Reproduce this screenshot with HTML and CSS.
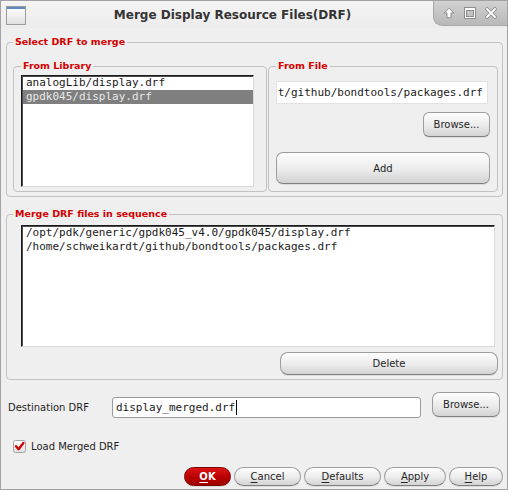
FILE: index.html
```html
<!DOCTYPE html>
<html>
<head>
<meta charset="utf-8">
<title>Merge Display Resource Files(DRF)</title>
<link rel="stylesheet" href="styles.css">
</head>
<body>
<div class="window">
  <div class="titlebar">
    <div class="app-icon"></div>
    <div class="title">Merge Display Resource Files(DRF)</div>
    <div class="wm">
      <svg width="12" height="12" viewBox="0 0 12 12"><path d="M6 1.2 L10.8 6 L8 6 L8 10.8 L4 10.8 L4 6 L1.2 6 Z" fill="#fff" stroke="#8c8c8c" stroke-width="1" stroke-linejoin="round"/></svg>
      <svg width="12" height="12" viewBox="0 0 12 12"><rect x="0.5" y="0.5" width="11" height="11" fill="#fff" stroke="#8c8c8c"/><rect x="2.5" y="3.5" width="7" height="6" fill="#c3c3c3" stroke="#8c8c8c"/></svg>
      <svg width="12" height="12" viewBox="0 0 12 12"><path d="M2 2 L10 10 M10 2 L2 10" stroke="#8c8c8c" stroke-width="3.6" stroke-linecap="round"/><path d="M2 2 L10 10 M10 2 L2 10" stroke="#fff" stroke-width="1.8" stroke-linecap="round"/></svg>
    </div>
  </div>
  <div class="content">
    <div class="group g-select">
      <div class="group-title">Select DRF to merge</div>
      <div class="select-row">
        <div class="group sub lib">
          <div class="group-title">From Library</div>
          <div class="listbox lib-list">
            <div class="row">analogLib/display.drf</div>
            <div class="row selected">gpdk045/display.drf</div>
          </div>
        </div>
        <div class="group sub file">
          <div class="group-title">From File</div>
          <div class="textfield">t/github/bondtools/packages.drf</div>
          <button class="btn browse-small">Browse...</button>
          <button class="btn add">Add</button>
        </div>
      </div>
    </div>
    <div class="group g-seq">
      <div class="group-title">Merge DRF files in sequence</div>
      <div class="listbox seq-list">
        <div class="row">/opt/pdk/generic/gpdk045_v4.0/gpdk045/display.drf</div>
        <div class="row">/home/schweikardt/github/bondtools/packages.drf</div>
      </div>
      <button class="btn delete">Delete</button>
    </div>
    <div class="dest-row">
      <span class="dest-label">Destination DRF</span>
      <div class="entry">display_merged.drf<span class="caret"></span></div>
      <button class="btn browse-dest">Browse...</button>
    </div>
    <div class="check-row">
      <svg class="checkbox" width="13" height="13" viewBox="0 0 13 13">
        <defs><linearGradient id="cb" x1="0" y1="0" x2="0" y2="1"><stop offset="0" stop-color="#ffffff"/><stop offset="1" stop-color="#dedede"/></linearGradient></defs>
        <rect x="0.5" y="0.5" width="12" height="12" rx="2" fill="url(#cb)" stroke="#a6a6a6"/>
        <path d="M3 6.2 L5.6 9.2 L10.4 3" fill="none" stroke="#d00000" stroke-width="2.3" stroke-linecap="round" stroke-linejoin="round"/>
      </svg>
      <span class="check-label">Load Merged DRF</span>
    </div>
    <div class="footer">
      <button class="btn pill ok"><u>O</u>K</button>
      <button class="btn pill cancel"><u>C</u>ancel</button>
      <button class="btn pill defaults"><u>D</u>efaults</button>
      <button class="btn pill apply"><u>A</u>pply</button>
      <button class="btn pill help"><u>H</u>elp</button>
    </div>
  </div>
</div>
</body>
</html>
```
FILE: styles.css
```css
html, body {
  margin: 0;
  padding: 0;
  background: #efefef;
}
body {
  font-family: "DejaVu Sans", sans-serif;
  font-size: 10px;
  color: #1e1e1e;
}
.window {
  width: 508px;
  height: 490px;
  box-sizing: border-box;
  border: 1px solid #a2a2a2;
  background: #efefef;
  display: flex;
  flex-direction: column;
  overflow: hidden;
}
.titlebar {
  height: 27px;
  flex: none;
  display: flex;
  align-items: flex-start;
  background: linear-gradient(#f4f4f4, #ececec);
}
.app-icon {
  width: 20px;
  height: 19px;
  margin: 5px 0 0 5px;
  box-sizing: border-box;
  border: 1px solid #9c9c9c;
  background: linear-gradient(#5f86c8 0, #5f86c8 2px, #fbfbfb 2px, #e1e1e1 100%);
}
.title {
  flex: 1;
  text-align: center;
  font-weight: bold;
  font-size: 12px;
  line-height: 28px;
  color: #343434;
  padding-left: 6px;
}
.wm {
  width: 74px;
  height: 26px;
  display: flex;
  align-items: center;
  justify-content: space-between;
  padding: 0 10px 0 9px;
  box-sizing: border-box;
  background: linear-gradient(#d2d2d2, #b8b8b8);
  border-left: 1px solid #a8a8a8;
  border-bottom: 1px solid #a8a8a8;
  border-bottom-left-radius: 9px;
  margin-top: -1px;
}
.content {
  flex: 1;
  padding: 0 4px 0 5px;
  display: flex;
  flex-direction: column;
}
.group {
  box-sizing: border-box;
  border: 1px solid #c2c2c2;
  border-radius: 4px;
  display: flex;
  flex-direction: column;
}
.group-title {
  align-self: flex-start;
  margin-top: -8px;
  padding: 0 2px;
  background: #efefef;
  font-weight: bold;
  font-size: 9.5px;
  line-height: 14px;
  color: #d40000;
  white-space: nowrap;
}
.g-select {
  margin-top: 14px;
  padding: 0 4px 4px 6px;
}
.select-row {
  display: flex;
  gap: 1px;
  margin-top: 17px;
}
.sub.lib {
  width: 254px;
  flex: none;
  padding: 0 12px 4px 7px;
}
.sub.file {
  flex: 1;
  padding: 0 7px 7px 7px;
}
.listbox {
  background: #fff;
  box-sizing: border-box;
  border: 1px solid;
  border-color: #1c1c1c #dadada #dadada #1c1c1c;
  box-shadow: inset 1px 1px 0 #4a4a4a;
  font-family: "DejaVu Sans Mono", monospace;
  font-size: 11px;
  color: #1a1a1a;
}
.row {
  line-height: 14px;
  height: 14px;
  padding-left: 4px;
  white-space: nowrap;
}
.row.selected {
  background: #7f7f7f;
  color: #e9e9e9;
  margin-left: 1px;
  padding-left: 3px;
}
.lib-list {
  margin-top: 2px;
  height: 112px;
}
.textfield {
  margin-top: 8px;
  width: 212px;
  height: 23px;
  box-sizing: border-box;
  background: #fff;
  border: 1px solid #e2e2e2;
  font-family: "DejaVu Sans Mono", monospace;
  font-size: 11px;
  line-height: 21px;
  text-align: right;
  padding-right: 4px;
  white-space: nowrap;
  overflow: hidden;
  color: #1a1a1a;
}
.btn {
  font-family: "DejaVu Sans", sans-serif;
  font-size: 10px;
  color: #262626;
  border: 1px solid #9d9d9d;
  border-bottom-color: #808080;
  border-radius: 6px;
  background: linear-gradient(#fefefe, #ebebeb 55%, #d3d3d3);
  box-shadow: 0 1px 0 rgba(0, 0, 0, 0.08);
  padding: 0;
  margin: 0;
  box-sizing: border-box;
}
.browse-small {
  align-self: flex-end;
  margin-top: 8px;
  width: 67px;
  height: 25px;
}
.add {
  margin-top: 15px;
  height: 32px;
  width: 100%;
  border-radius: 7px;
}
.g-seq {
  margin-top: 17px;
  padding: 0 4px 4px 6px;
}
.seq-list {
  height: 122px;
  margin: 4px 3px 0 8px;
}
.delete {
  align-self: flex-end;
  margin-top: 5px;
  width: 218px;
  height: 23px;
  border-radius: 8px;
}
.dest-row {
  display: flex;
  align-items: flex-start;
  margin-top: 12px;
}
.dest-label {
  margin-left: 2px;
  width: 104px;
  flex: none;
  line-height: 21px;
  margin-top: 5px;
  color: #1e1e1e;
}
.entry {
  margin-top: 5px;
  width: 309px;
  height: 21px;
  box-sizing: border-box;
  background: #fff;
  border: 1px solid #9a9a9a;
  border-radius: 3px;
  font-family: "DejaVu Sans Mono", monospace;
  font-size: 11px;
  line-height: 19px;
  padding-left: 3px;
  color: #1a1a1a;
  display: flex;
  align-items: center;
}
.caret {
  display: inline-block;
  width: 1px;
  height: 15px;
  background: #000;
  margin-left: 1px;
}
.browse-dest {
  margin-left: 11px;
  width: 68px;
  height: 25px;
  border-radius: 7px;
}
.check-row {
  display: flex;
  align-items: center;
  margin-top: 22px;
}
.checkbox {
  margin-left: 7px;
  flex: none;
}
.check-label {
  margin-left: 5px;
  line-height: 13px;
}
.footer {
  margin-top: 14px;
  display: flex;
  justify-content: flex-end;
  gap: 3px;
}
.pill {
  height: 19px;
  border-radius: 10px;
  line-height: 17px;
}
.pill u {
  text-decoration-thickness: 1px;
  text-underline-offset: 2px;
}
.ok {
  width: 47px;
  color: #fff;
  font-weight: bold;
  border-color: #7c0000;
  background: linear-gradient(#dc1414, #b90000 55%, #a00000);
}
.cancel { width: 67px; }
.defaults { width: 77px; }
.apply { width: 62px; }
.help { width: 54px; }
```
